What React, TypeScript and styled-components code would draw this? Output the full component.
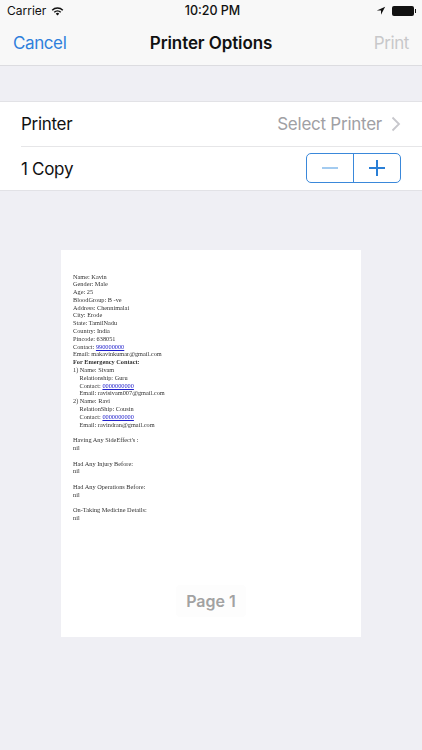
import React from 'react';
import styled, { createGlobalStyle } from 'styled-components';

const GlobalStyle = createGlobalStyle`
  html, body {
    margin: 0;
    padding: 0;
    background: #efeff4;
    font-family: Inter, "Liberation Sans", sans-serif;
  }
`;

const mainLines = [
  'Name: Kavin',
  'Gender: Male',
  'Age: 25',
  'BloodGroup: B -ve',
  'Address: Chennimalai',
  'City: Erode',
  'State: TamilNadu',
  'Country: India',
  'Pincode: 638051',
];

const App: React.FC = () => {
  return (
    <Screen>
      <GlobalStyle />
      <TopBar>
        <StatusBar>
          <StatusLeft>
            Carrier
            <svg width="13" height="10" viewBox="0 0 19 14">
              <path d="M1 5a12 12 0 0 1 17 0l-1.500 1.500a10 10 0 0 0-14 0z" fill="#111" />
              <path d="M4 8a8 8 0 0 1 11 0l-1.500 1.500a6 6 0 0 0-8 0z" fill="#111" />
              <path d="M7 11a3.500 3.500 0 0 1 5 0l-2.500 2.500z" fill="#111" />
            </svg>
          </StatusLeft>
          <StatusTime>10:20 PM</StatusTime>
          <StatusRight>
            <svg width="10" height="10" viewBox="0 0 12 12">
              <path d="M11 1 1 5.500h5V10.500z" fill="#111" />
            </svg>
            <Battery />
          </StatusRight>
        </StatusBar>
        <NavBar>
          <NavAction>Cancel</NavAction>
          <NavTitle>Printer Options</NavTitle>
          <NavAction $disabled $end>Print</NavAction>
        </NavBar>
      </TopBar>

      <Group>
        <Row>
          <RowLabel>Printer</RowLabel>
          <RowValue>
            Select Printer
            <svg width="10" height="16" viewBox="0 0 10 16">
              <path d="M1.500 1.500 8 8l-6.500 6.500" fill="none" stroke="#c7c7cc" strokeWidth="1.800" />
            </svg>
          </RowValue>
        </Row>
        <Row>
          <RowLabel>1 Copy</RowLabel>
          <Stepper>
            <StepButton>
              <svg width="16" height="16" viewBox="0 0 16 16">
                <path d="M0 8h16" stroke="#a3cbf0" strokeWidth="2" />
              </svg>
            </StepButton>
            <StepButton>
              <svg width="16" height="16" viewBox="0 0 16 16">
                <path d="M0 8h16M8 0v16" stroke="#2a7fd6" strokeWidth="2" />
              </svg>
            </StepButton>
          </Stepper>
        </Row>
      </Group>

      <Preview>
        <Sheet>
          <Doc>
            {mainLines.map((line) => (
              <div key={line}>{line}</div>
            ))}
            <div>Contact: <DocLink>990000000</DocLink></div>
            <div>Email: makavinkumar@gmail.com</div>
            <strong>For Emergency Contact:</strong>
            <div>1) Name: Sivam</div>
            <Indented>
              <div>Relationship: Guru</div>
              <div>Contact: <DocLink>0000000000</DocLink></div>
              <div>Email: ravisivam007@gmail.com</div>
            </Indented>
            <div>2) Name: Ravi</div>
            <Indented>
              <div>RelationShip: Cousin</div>
              <div>Contact: <DocLink>0000000000</DocLink></div>
              <div>Email: ravindran@gmail.com</div>
            </Indented>
            <DocSection>Having Any SideEffect's :<div>nil</div></DocSection>
            <DocSection>Had Any Injury Before:<div>nil</div></DocSection>
            <DocSection>Had Any Operations Before:<div>nil</div></DocSection>
            <DocSection>On-Taking Medicine Details:<div>nil</div></DocSection>
          </Doc>
          <PageBadge>Page 1</PageBadge>
        </Sheet>
      </Preview>
    </Screen>
  );
};

const Screen = styled.div`
  width: 422px;
  height: 750px;
  overflow: hidden;
  background: #efeff4;
  display: flex;
  flex-direction: column;
`;

const TopBar = styled.div`
  height: 66px;
  box-sizing: border-box;
  background: #f8f8f8;
  border-bottom: 1px solid #dcdce0;
`;

const StatusBar = styled.div`
  height: 21px;
  display: grid;
  grid-template-columns: 1fr auto 1fr;
  align-items: center;
  padding: 0 7px;
  font-size: 12px;
  color: #111;
`;

const StatusLeft = styled.div`
  display: flex;
  align-items: center;
  gap: 5px;
`;

const StatusTime = styled.div`
  font-weight: 500;
  font-size: 12.500px;
  padding-left: 3px;
`;

const StatusRight = styled.div`
  display: flex;
  align-items: center;
  justify-content: flex-end;
  gap: 6px;
`;

const Battery = styled.div`
  position: relative;
  width: 22px;
  height: 10px;
  border-radius: 2px;
  background: #111;
  margin-right: 1px;
  &::after {
    content: '';
    position: absolute;
    right: -2px;
    top: 3px;
    width: 1px;
    height: 4px;
    background: #111;
  }
`;

const NavBar = styled.div`
  height: 44px;
  display: grid;
  grid-template-columns: 1fr auto 1fr;
  align-items: center;
  padding: 0 13px;
`;

const NavAction = styled.div<{ $disabled?: boolean; $end?: boolean }>`
  font-size: 17px;
  letter-spacing: -0.4px;
  text-align: ${(p) => (p.$end ? 'right' : 'left')};
  color: ${(p) => (p.$disabled ? '#c8c8ca' : '#2f80dc')};
`;

const NavTitle = styled.div`
  font-size: 17px;
  font-weight: 600;
  letter-spacing: -0.1px;
  color: #111;
`;

const Group = styled.div`
  margin-top: 35px;
  padding-left: 21px;
  background: #fff;
  border-top: 1px solid #e2e2e6;
  border-bottom: 1px solid #e2e2e6;
`;

const Row = styled.div`
  height: 44px;
  box-sizing: border-box;
  display: flex;
  align-items: center;
  justify-content: space-between;
  padding-right: 21px;
  & + & {
    border-top: 1px solid #e6e6e8;
  }
`;

const RowLabel = styled.div`
  font-size: 17px;
  letter-spacing: -0.3px;
  color: #111;
`;

const RowValue = styled.div`
  display: flex;
  align-items: center;
  gap: 9px;
  font-size: 17px;
  letter-spacing: -0.25px;
  color: #a0a0a4;
`;

const Stepper = styled.div`
  display: flex;
  width: 95px;
  height: 30px;
  margin-bottom: 2px;
  box-sizing: border-box;
  border: 1px solid #3a88da;
  border-radius: 5px;
`;

const StepButton = styled.div`
  flex: 1;
  display: flex;
  align-items: center;
  justify-content: center;
  & + & {
    border-left: 1px solid #3a88da;
  }
`;

const Preview = styled.div`
  flex: 1;
  padding: 59px 61px 0;
`;

const Sheet = styled.div`
  position: relative;
  width: 300px;
  height: 387px;
  box-sizing: border-box;
  padding: 22.500px 12px;
  background: #fff;
`;

const Doc = styled.div`
  font-family: "Liberation Serif", serif;
  font-size: 6.300px;
  line-height: 7.800px;
  color: #333;
  filter: blur(0.2px);
`;

const DocLink = styled.span`
  color: #2222cc;
  text-decoration: underline;
`;

const Indented = styled.div`
  padding-left: 6.500px;
`;

const DocSection = styled.div`
  margin-top: 7.800px;
`;

const PageBadge = styled.div`
  position: absolute;
  left: 115px;
  bottom: 20px;
  width: 70px;
  padding: 6px 0;
  border-radius: 4px;
  text-align: center;
  font-size: 16px;
  font-weight: 600;
  color: #a2a2a2;
  background: #fdfdfd;
`;

export default App;
